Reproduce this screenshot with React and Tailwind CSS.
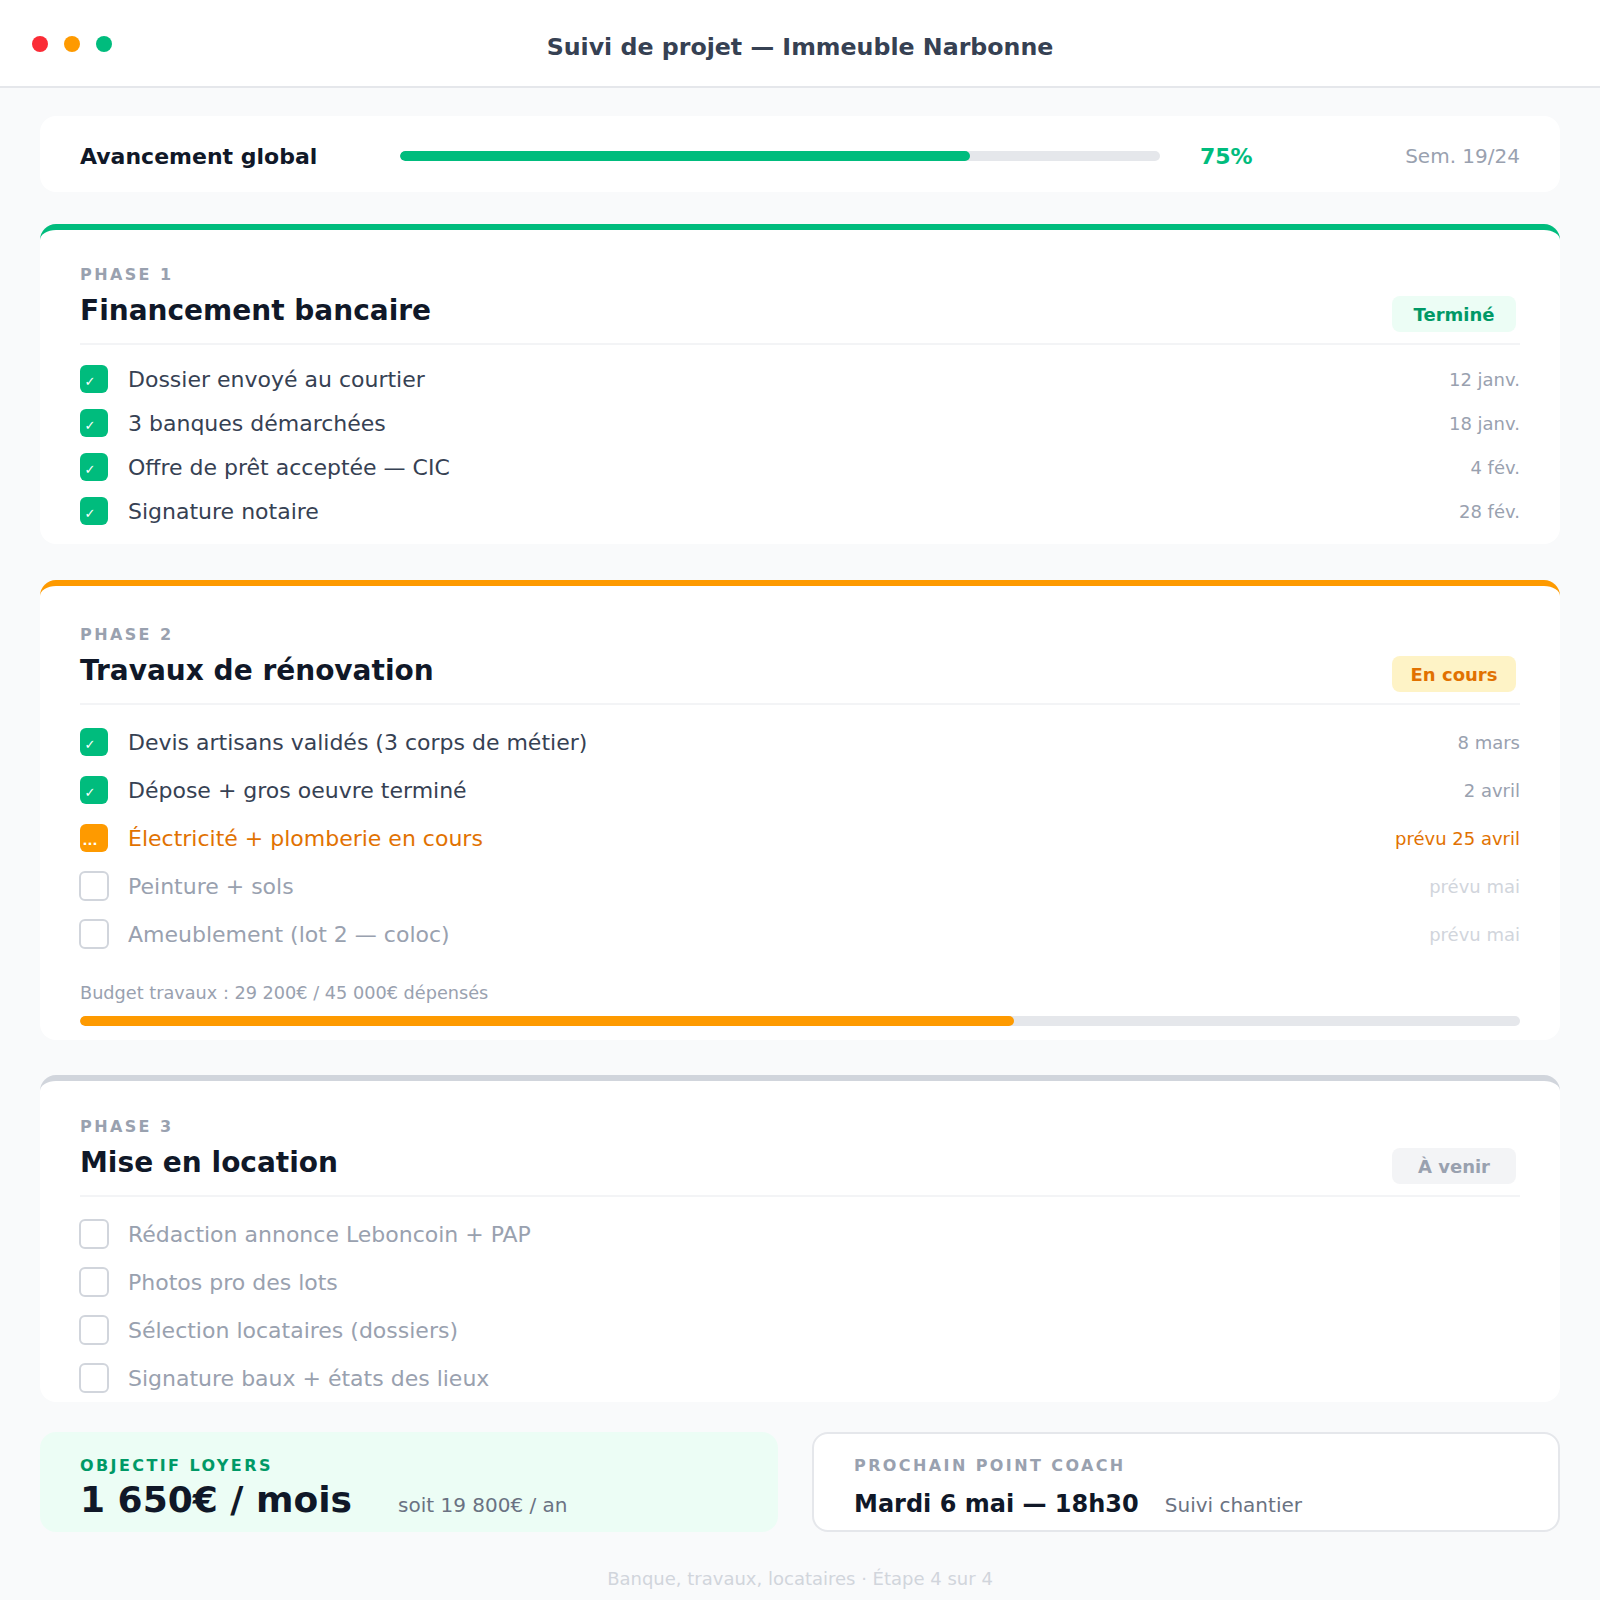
const phases = [
  {
    num: 1,
    title: "Financement bancaire",
    status: "Terminé",
    bar: "border-t-emerald-500",
    badge: "bg-emerald-50 text-emerald-600",
    rowH: "h-11",
    pad: "pt-[33px] pb-[11px]",
    listPad: "pt-3",
    items: [
      { label: "Dossier envoyé au courtier", date: "12 janv.", state: "done" },
      { label: "3 banques démarchées", date: "18 janv.", state: "done" },
      { label: "Offre de prêt acceptée — CIC", date: "4 fév.", state: "done" },
      { label: "Signature notaire", date: "28 fév.", state: "done" },
    ],
  },
  {
    num: 2,
    title: "Travaux de rénovation",
    status: "En cours",
    bar: "border-t-amber-500",
    badge: "bg-amber-100 text-amber-600",
    rowH: "h-12",
    pad: "pt-[37px] pb-[14px]",
    listPad: "pt-[13px]",
    budget: { spent: 29200, total: 45000, text: "Budget travaux : 29 200€ / 45 000€ dépensés" },
    items: [
      { label: "Devis artisans validés (3 corps de métier)", date: "8 mars", state: "done" },
      { label: "Dépose + gros oeuvre terminé", date: "2 avril", state: "done" },
      { label: "Électricité + plomberie en cours", date: "prévu 25 avril", state: "doing" },
      { label: "Peinture + sols", date: "prévu mai", state: "todo" },
      { label: "Ameublement (lot 2 — coloc)", date: "prévu mai", state: "todo" },
    ],
  },
  {
    num: 3,
    title: "Mise en location",
    status: "À venir",
    bar: "border-t-gray-300",
    badge: "bg-gray-100 text-gray-400",
    rowH: "h-12",
    pad: "pt-[34px]",
    listPad: "pt-[13px]",
    items: [
      { label: "Rédaction annonce Leboncoin + PAP", date: "", state: "todo" },
      { label: "Photos pro des lots", date: "", state: "todo" },
      { label: "Sélection locataires (dossiers)", date: "", state: "todo" },
      { label: "Signature baux + états des lieux", date: "", state: "todo" },
    ],
  },
];

function Box({ state }) {
  if (state === "done") {
    return (
      <div className="w-7 h-7 shrink-0 rounded-md bg-emerald-500 flex items-center justify-center pr-2 pt-1 text-white text-[13px] leading-none">
        ✓
      </div>
    );
  }
  if (state === "doing") {
    return (
      <div className="w-7 h-7 shrink-0 rounded-md bg-amber-500 flex items-center justify-center pr-2 pt-1 text-white text-[13px] font-bold leading-none">
        ...
      </div>
    );
  }
  return <div className="w-[30px] h-[30px] -mx-px shrink-0 rounded-md border-2 border-gray-300 bg-white" />;
}

function Row({ item, h }) {
  const text =
    item.state === "done" ? "text-gray-700" : item.state === "doing" ? "text-amber-600" : "text-gray-400";
  const date =
    item.state === "done" ? "text-gray-400" : item.state === "doing" ? "text-amber-600" : "text-gray-300";
  return (
    <div className={`flex items-center ${h}`}>
      <Box state={item.state} />
      <span className={`ml-5 text-[22px] ${text}`}>{item.label}</span>
      <span className={`ml-auto text-[18px] ${date}`}>{item.date}</span>
    </div>
  );
}

function PhaseCard({ phase, className }) {
  return (
    <div className={`bg-white rounded-2xl border-t-[6px] ${phase.bar} px-10 ${phase.pad} ${className}`}>
      <div className="flex items-end justify-between pb-3 border-b-2 border-gray-100">
        <div>
          <div className="text-[16px] leading-6 font-bold tracking-[0.15em] text-gray-400">PHASE {phase.num}</div>
          <div className="mt-1 text-[28px] leading-10 font-bold text-gray-900">{phase.title}</div>
        </div>
        <div className={`mr-1 mb-[-1px] h-9 w-[124px] rounded-lg flex items-center justify-center text-[18px] font-bold ${phase.badge}`}>
          {phase.status}
        </div>
      </div>
      <div className={phase.listPad}>
        {phase.items.map((it) => (
          <Row key={it.label} item={it} h={phase.rowH} />
        ))}
      </div>
      {phase.budget && (
        <div>
          <div className="mt-[22px] text-[17.7px] leading-[27px] text-gray-400">{phase.budget.text}</div>
          <div className="mt-[9px] h-2.5 rounded-full bg-gray-200 overflow-hidden">
            <div
              className="h-full rounded-full bg-amber-500"
              style={{ width: `${(phase.budget.spent / phase.budget.total) * 100}%` }}
            />
          </div>
        </div>
      )}
    </div>
  );
}

export default function App() {
  return (
    <div className="min-h-screen bg-gray-50" style={{ fontFamily: "'DejaVu Sans', 'Noto Sans', sans-serif" }}>
      <header className="h-[88px] bg-white border-b-2 border-gray-200 grid grid-cols-[1fr_auto_1fr] items-center px-8">
        <div className="flex gap-4 pt-0.5">
          <span className="w-4 h-4 rounded-full bg-red-500" />
          <span className="w-4 h-4 rounded-full bg-amber-500" />
          <span className="w-4 h-4 rounded-full bg-emerald-500" />
        </div>
        <h1 className="pt-[10px] text-[23.7px] font-bold text-gray-700">Suivi de projet — Immeuble Narbonne</h1>
        <div />
      </header>

      <main className="px-10 pt-7 pb-2">
        <div className="bg-white rounded-2xl h-[76px] px-10 pt-1 flex items-center">
          <div className="w-[320px] text-[22px] font-bold text-gray-900">Avancement global</div>
          <div className="flex-1 h-2.5 rounded-full bg-gray-200 overflow-hidden">
            <div className="h-full rounded-full bg-emerald-500" style={{ width: "75%" }} />
          </div>
          <div className="ml-10 w-[160px] text-[22px] font-bold text-emerald-500">75%</div>
          <div className="w-[160px] text-right text-[20px] text-gray-400">Sem. 19/24</div>
        </div>

        <PhaseCard phase={phases[0]} className="mt-8" />
        <PhaseCard phase={phases[1]} className="mt-9" />
        <PhaseCard phase={phases[2]} className="mt-[35px]" />

        <div className="mt-[30px] grid grid-cols-[738px_1fr] gap-[34px]">
          <div className="rounded-2xl bg-emerald-50 border-2 border-emerald-50 pl-[38px] pr-10 pt-5 pb-2.5">
            <div className="text-[16px] leading-6 font-bold tracking-[0.15em] text-emerald-600">OBJECTIF LOYERS</div>
            <div className="mt-0.5 flex items-baseline">
              <span className="text-[36px] leading-10 font-bold text-gray-900">1 650€ / mois</span>
              <span className="ml-[46px] text-[20px] text-gray-500">soit 19 800€ / an</span>
            </div>
          </div>
          <div className="rounded-2xl bg-white border-2 border-gray-200 px-10 pt-5 pb-1">
            <div className="text-[16px] leading-6 font-bold tracking-[0.15em] text-gray-400">PROCHAIN POINT COACH</div>
            <div className="mt-2 flex items-baseline">
              <span className="text-[24px] font-bold text-gray-900">Mardi 6 mai — 18h30</span>
              <span className="ml-[26px] text-[20px] text-gray-500">Suivi chantier</span>
            </div>
          </div>
        </div>

        <div className="mt-[33px] text-center text-[18px] leading-[27px] text-gray-300">
          Banque, travaux, locataires · Étape 4 sur 4
        </div>
      </main>
    </div>
  );
}
